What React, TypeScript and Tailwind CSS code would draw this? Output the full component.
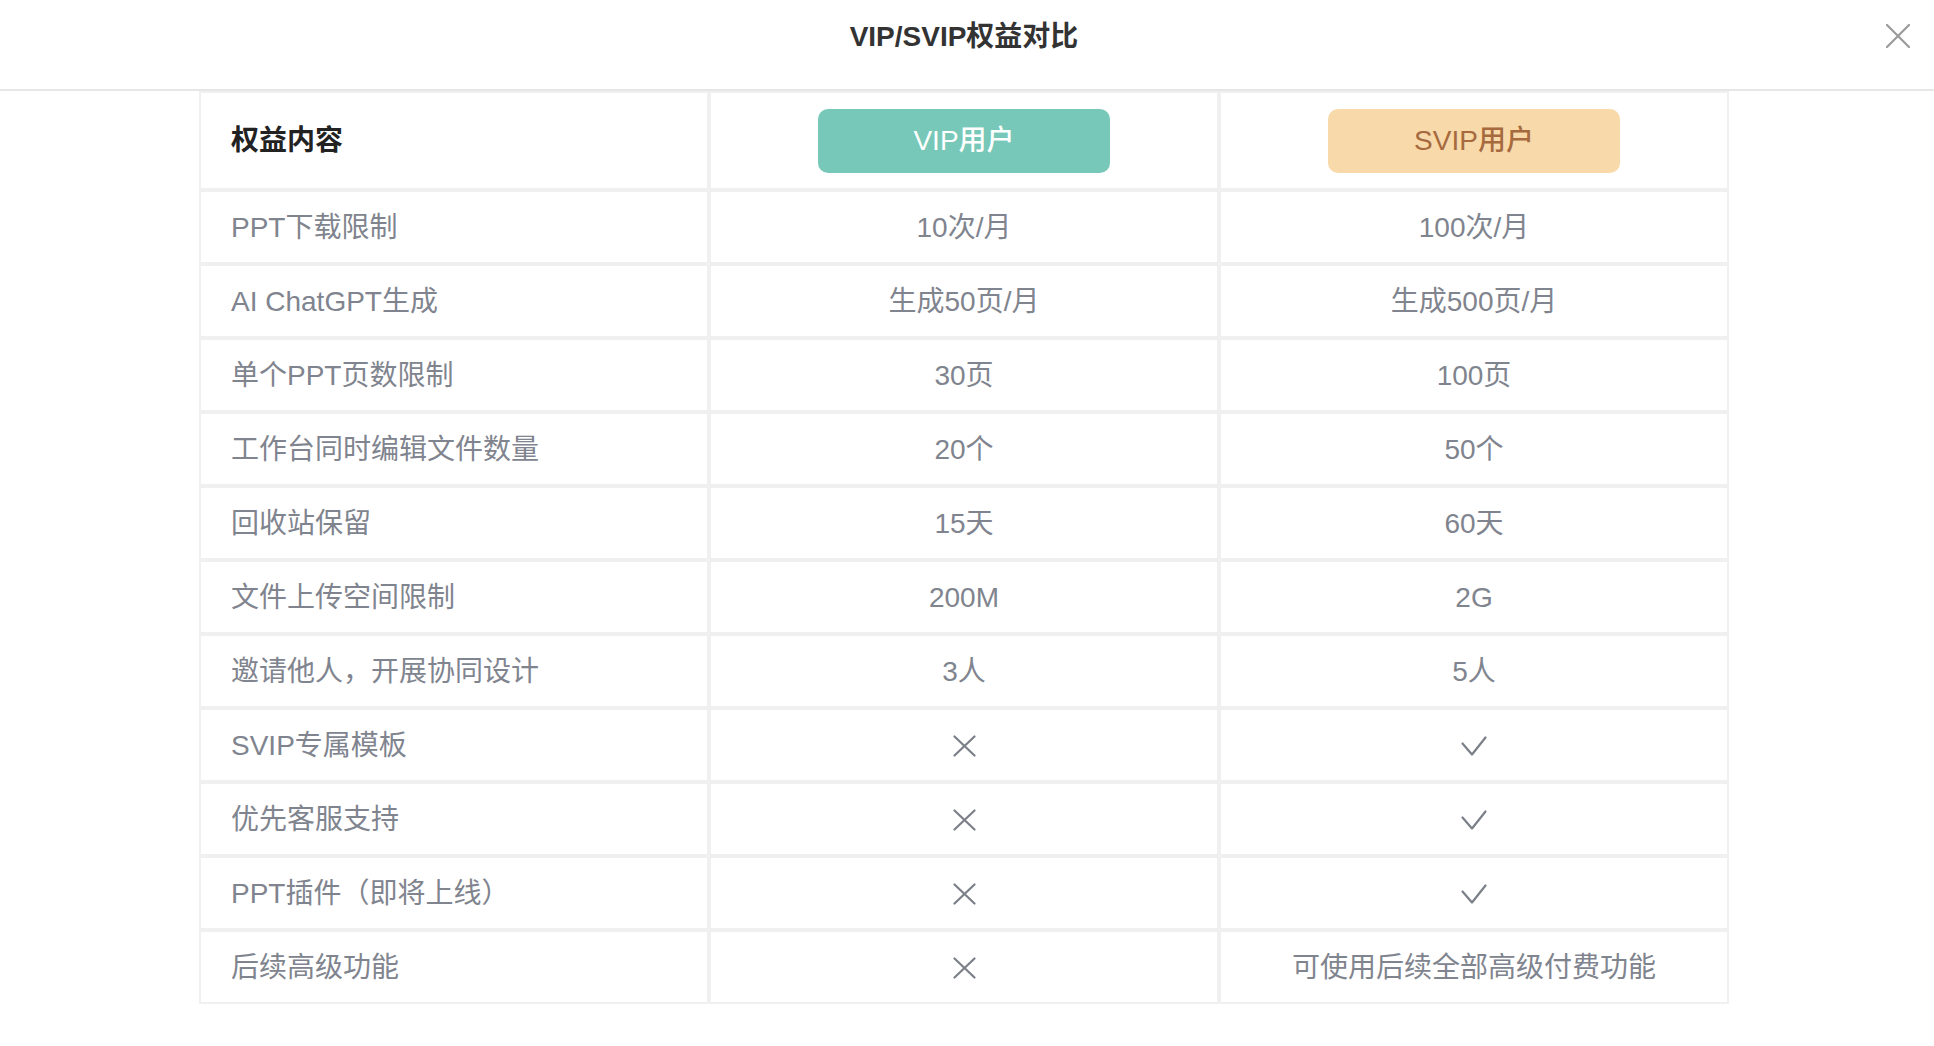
import React from "react";

type Cell = string | "yes" | "no";

interface Row {
  label: string;
  vip: Cell;
  svip: Cell;
}

const ROWS: Row[] = [
  { label: "PPT下载限制", vip: "10次/月", svip: "100次/月" },
  { label: "AI ChatGPT生成", vip: "生成50页/月", svip: "生成500页/月" },
  { label: "单个PPT页数限制", vip: "30页", svip: "100页" },
  { label: "工作台同时编辑文件数量", vip: "20个", svip: "50个" },
  { label: "回收站保留", vip: "15天", svip: "60天" },
  { label: "文件上传空间限制", vip: "200M", svip: "2G" },
  { label: "邀请他人，开展协同设计", vip: "3人", svip: "5人" },
  { label: "SVIP专属模板", vip: "no", svip: "yes" },
  { label: "优先客服支持", vip: "no", svip: "yes" },
  { label: "PPT插件（即将上线）", vip: "no", svip: "yes" },
  { label: "后续高级功能", vip: "no", svip: "可使用后续全部高级付费功能" },
];

function CrossIcon() {
  return (
    <svg width="23" height="22" viewBox="0 0 23 22" fill="none" className="inline-block -translate-y-[2px]">
      <path d="M1.5 1.5L21.5 20.5M21.5 1.5L1.5 20.5" stroke="#7a7f88" strokeWidth="2.2" strokeLinecap="round" />
    </svg>
  );
}

function CheckIcon() {
  return (
    <svg width="26" height="20" viewBox="0 0 26 20" fill="none" className="inline-block -translate-y-[2px]">
      <path d="M1.5 7.5L11 18.5L24.5 1.5" stroke="#7a7f88" strokeWidth="2.2" strokeLinecap="round" strokeLinejoin="round" />
    </svg>
  );
}

function renderCell(v: Cell) {
  if (v === "no") return <CrossIcon />;
  if (v === "yes") return <CheckIcon />;
  return v;
}

const cellBase = "border-2 border-[#f0f0f0] p-0 align-middle";

export default function App() {
  return (
    <div
      className="min-h-[1046px] w-full bg-white"
      style={{ fontFamily: '"Liberation Sans", "Noto Sans CJK SC", sans-serif' }}
    >
      <div className="relative h-[91px] border-b-2 border-[#e6e6e6]">
        <h1 className="pr-[6px] pt-[19px] text-center text-[28px] font-bold leading-[36px] text-[#333333]">
          VIP/SVIP权益对比
        </h1>
        <button className="absolute right-[24px] top-[24px] flex h-[24px] w-[24px] items-center justify-center">
          <svg width="24" height="24" viewBox="0 0 24 24" fill="none">
            <path d="M1 1L23 23M23 1L1 23" stroke="#9a9a9a" strokeWidth="2.2" strokeLinecap="round" />
          </svg>
        </button>
      </div>

      <table className="ml-[199px] w-[1530px] table-fixed border-separate border-spacing-0 text-[28px]">
        <thead>
          <tr className="h-[99px]">
            <th className={`${cellBase} pl-[30px] text-left font-bold text-[#222222]`}>权益内容</th>
            <th className={cellBase}>
              <div className="mx-auto flex h-[64px] w-[292px] items-center justify-center rounded-[10px] bg-[#77c8b8] font-medium text-white">
                VIP用户
              </div>
            </th>
            <th className={cellBase}>
              <div className="mx-auto flex h-[64px] w-[292px] items-center justify-center rounded-[10px] bg-[#f8d9aa] font-medium text-[#a66a3e]">
                SVIP用户
              </div>
            </th>
          </tr>
        </thead>
        <tbody>
          {ROWS.map((r) => (
            <tr key={r.label} className="h-[74px] text-[#80848e]">
              <td className={`${cellBase} pl-[30px] pt-[2px] text-left`}>{r.label}</td>
              <td className={`${cellBase} pt-[2px] text-center`}>{renderCell(r.vip)}</td>
              <td className={`${cellBase} pt-[2px] text-center`}>{renderCell(r.svip)}</td>
            </tr>
          ))}
        </tbody>
      </table>
    </div>
  );
}
